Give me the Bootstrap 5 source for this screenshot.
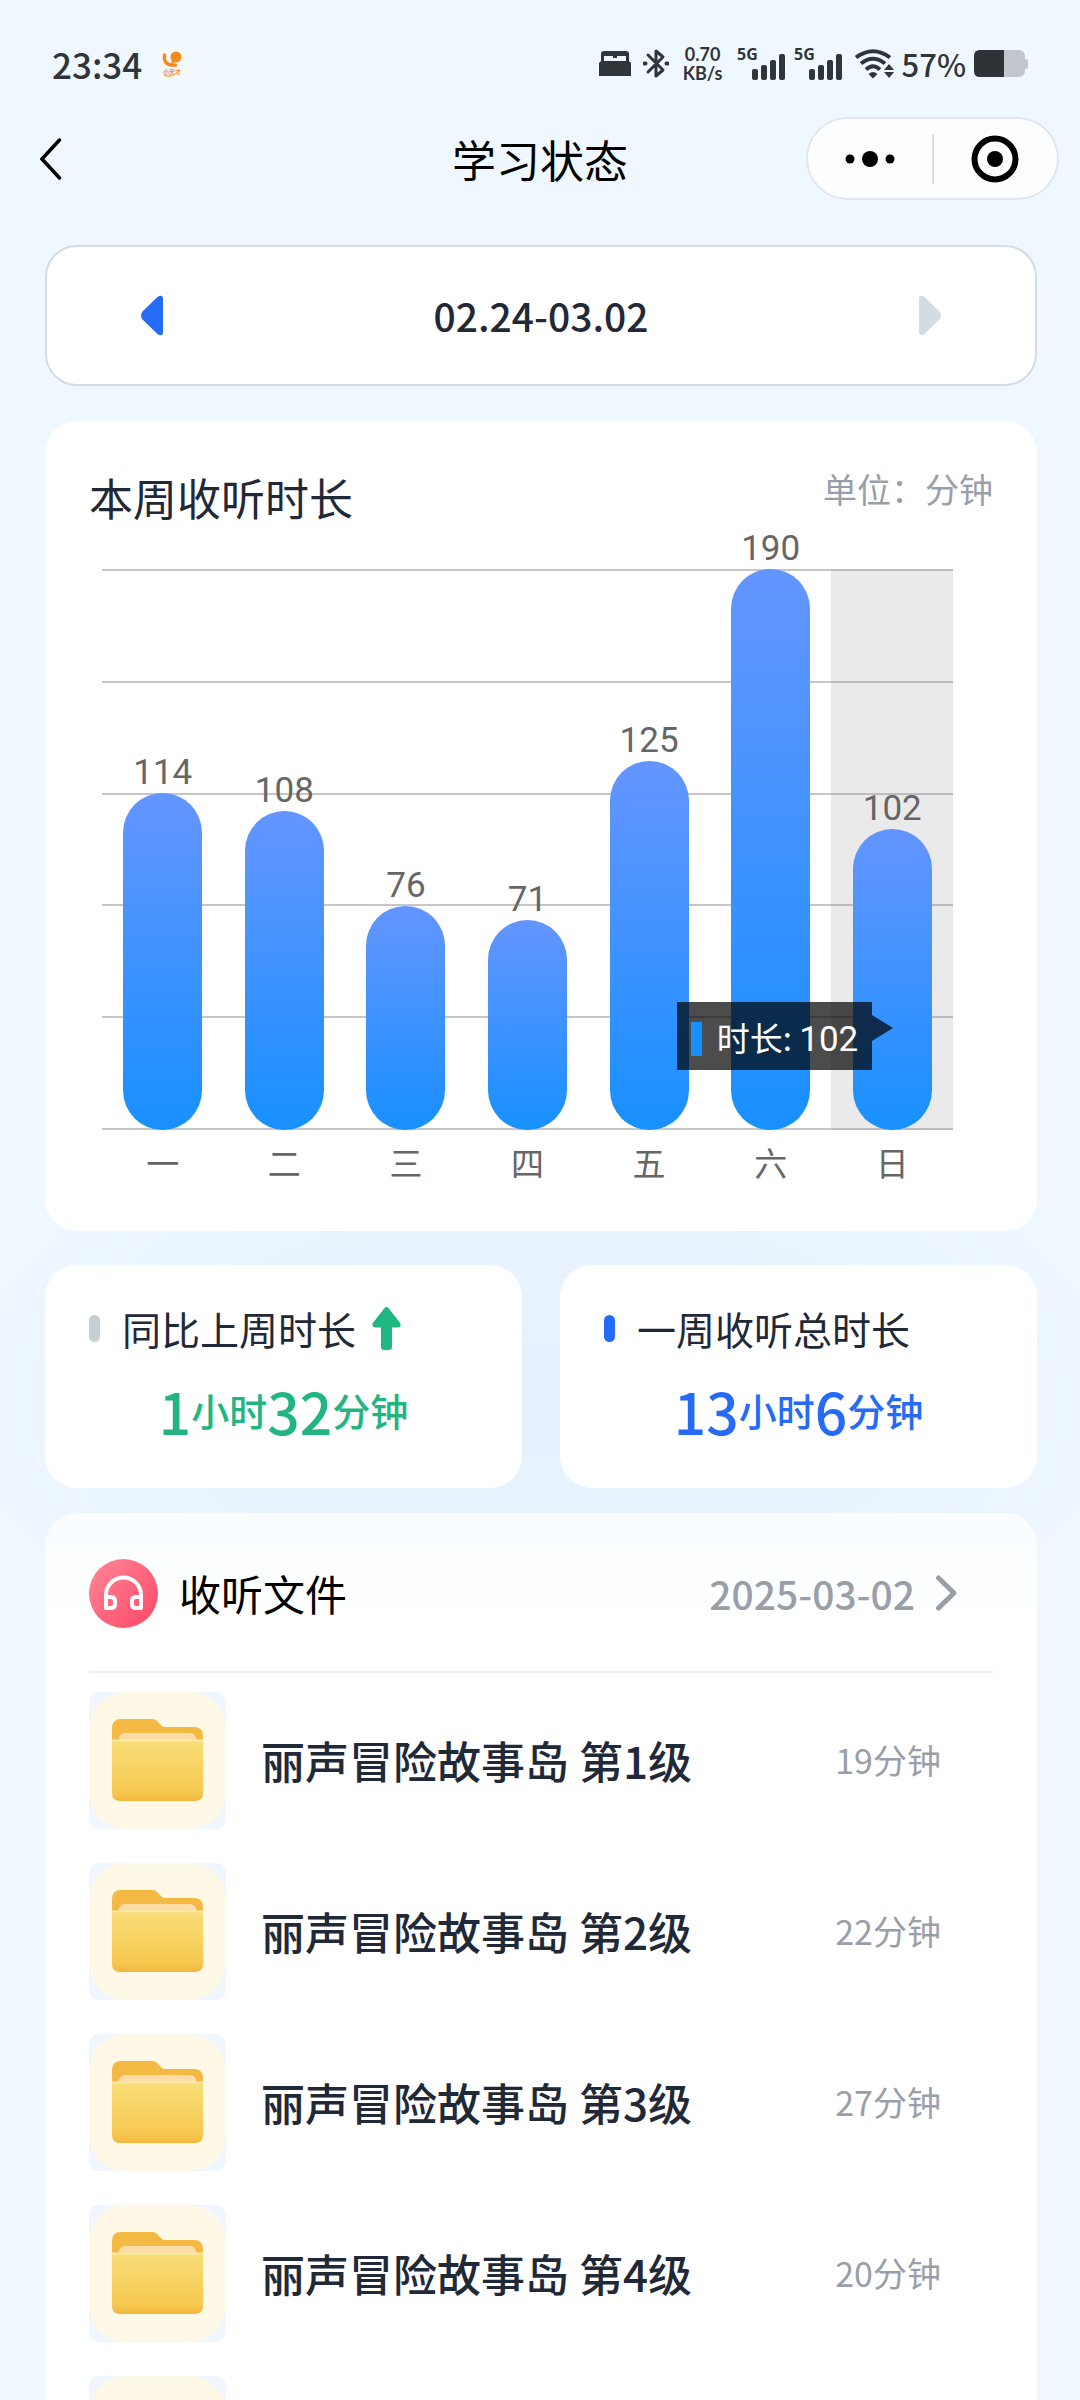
<!DOCTYPE html>
<html lang="zh-CN">
<head>
<meta charset="utf-8">
<meta name="viewport" content="width=device-width, initial-scale=1">
<title>学习状态</title>
<link rel="stylesheet" href="https://cdn.jsdelivr.net/npm/bootstrap@5.3.0/dist/css/bootstrap.min.css">
<style>
:root{--ink:#1f2937;--muted:#9a9ea9;--brand:#256bf8;--green:#22b57f;--status:#303539}
body{font-family:"Noto Sans CJK SC",sans-serif;color:var(--ink);background:#f0f8ff;line-height:1.2}
.app{background:radial-gradient(ellipse 640px 340px at 50% 1400px,#e5f1fe 0,#e8f3fe 55%,#f0f8ff 100%)}
.statusbar{padding:38px 52px 0;height:117px;color:var(--status)}
.statusbar .items{height:52px}
.gap-x{gap:8px}
.clock{font-size:35px;font-weight:500}
.pct{font-size:31px;font-weight:500}
.speed{width:44px;font-size:18px;line-height:19px;font-weight:700;font-family:Lato,sans-serif}
.topnav{display:grid;grid-template-columns:1fr auto 1fr;padding:0 21px;height:83px}
.topnav h1{font-size:44px;font-weight:400;color:#000;line-height:54px}
.back{padding:0 19px}
.capsule{width:253px;height:83px;border:2px solid #e3e5ec;border-radius:42px;background:#fbfdff}
.capsule .btn{flex:1 1 0}
.capsule .rule{width:2px;height:50px;background:#dcdee3}
main{padding:45px 43px 0 45px}
.panel{background:#fff;border-radius:32px}
.range{height:141px;border:2px solid #d4dce2;padding:0 94px}
.range .period{font-size:39px;font-weight:500}
.chart-panel{margin-top:35px;padding:49px 44px 37px}
.chart-title{font-size:44px;font-weight:400;line-height:54px}
.unit{font-size:34px;line-height:38px;color:var(--muted)}
.chart{margin:45px 40px 0 13px}
.plot{height:561px}
.gridlines i{height:2px;background:#c6c6c6}
.day{flex:1 1 0}
.day.active-day{background:rgba(150,150,150,.2)}
.amount{font-family:Roboto,sans-serif;font-size:35px;line-height:40px;color:#666}
.bar{width:79px;flex:none;border-radius:40px;background:linear-gradient(#6495ff,#1890ff)}
.axis span{flex:1 1 0;font-size:33px;line-height:64px;color:#666}
.tip{right:calc(50% + 20px);top:433px;height:68px;padding:6px 14px 0;gap:15px;background:rgba(0,0,0,.7);color:#fff;font-size:33px;white-space:nowrap}
.tip::after{content:"";position:absolute;left:100%;top:13px;border:13px solid transparent;border-left:21px solid rgba(0,0,0,.7);border-right:0}
.tip .swatch{width:11px;height:34px;background:#1890ff}
.tip .num{font-family:Roboto,sans-serif;font-size:35px}
.stats{margin-top:34px;gap:38px}
.stat{flex:1 1 0;padding:36px 44px 46px}
.stat-head{height:54px;font-size:39px}
.pill{width:11px;height:27px;border-radius:6px;background:#c3d0d6;margin-right:22px}
.pill.blue{background:var(--brand)}
.stat-value{margin-top:23px;line-height:64px;font-weight:500;font-size:38px}
.stat-value b{font-size:57px;font-weight:500}
.green{color:var(--green)}.blue-text{color:var(--brand)}
.files{margin-top:25px;padding:46px 44px 0;border-radius:32px 32px 0 0;background:linear-gradient(#f9fdff,#fff 120px)}
.files-head{height:114px;padding-bottom:44px;border-bottom:2px solid #eee}
.files-head h2{font-size:42px;font-weight:400;color:#000;margin-left:21px}
.pick{font-size:39px;font-weight:500;color:var(--muted);gap:20px;margin-right:36px}
.file-list{padding-top:19px;gap:34px}
.tile{width:137px;height:137px;flex:none}
.file-name{font-size:44px;font-weight:500;margin-left:35px}
.mins{font-size:34px;color:var(--muted);margin-right:52px}
</style>
</head>
<body>
<svg width="0" height="0" class="position-absolute" aria-hidden="true">
  <defs>
    <linearGradient id="front" x1="0" y1="0" x2="0" y2="1"><stop offset="0" stop-color="#f9de79"/><stop offset=".85" stop-color="#f6c84f"/><stop offset="1" stop-color="#f2b740"/></linearGradient>
    <linearGradient id="pink" x1="0" y1="0" x2="1" y2="1"><stop offset="0" stop-color="#ff8797"/><stop offset="1" stop-color="#fd4766"/></linearGradient>
    <symbol id="folder" viewBox="0 0 137 137">
      <rect width="137" height="137" rx="10" fill="#eff6ff"/>
      <rect width="137" height="137" rx="36" fill="#fef8e6"/>
      <path d="M23 52V36q0-9 9-9h31q4 0 6 3l3 3q1 2 4 2h29q9 0 9 9v8z" fill="#f3b942"/>
      <path d="M29 50q1-9 7-9h65q6 0 7 9z" fill="#fddca6"/>
      <path d="M23 48h91v53q0 8-8 8H31q-8 0-8-8z" fill="url(#front)"/>
      <path d="M23 48.500h91" stroke="#fbe9a8" stroke-width="2"/>
    </symbol>
    <symbol id="signal" viewBox="0 0 49 34">
      <g fill="#303539"><rect x="15" y="22" width="6" height="11" rx="2"/><rect x="24" y="18" width="6" height="15" rx="2"/><rect x="33" y="13" width="6" height="20" rx="2"/><rect x="42" y="7" width="6" height="26" rx="2"/></g>
      <text x="0" y="13" font-family="Open Sans" font-weight="700" font-size="16" fill="#303539">5G</text>
    </symbol>
  </defs>
</svg>

<div class="app vh-100 overflow-hidden">
  <header>
    <div class="statusbar">
      <div class="items d-flex align-items-center justify-content-between">
        <div class="d-flex align-items-center gap-3">
          <span class="clock">23:34</span>
          <svg width="28" height="32" viewBox="0 0 28 32" aria-label="小天才"><rect width="28" height="32" rx="4" fill="#f6f7f8"/><circle cx="18" cy="9" r="5.500" fill="#f58a1c"/><path d="M14 12l-1 4 4-2z" fill="#f58a1c"/><path d="M6.500 7v4q1 5 6 6h5" fill="none" stroke="#f58a1c" stroke-width="3.500" stroke-linecap="round"/><text x="5" y="26" font-size="6" font-weight="700" fill="#f58a1c">小天才</text><path d="M6 27q6 3 11-1" fill="none" stroke="#f58a1c"/></svg>
        </div>
        <div class="d-flex align-items-center gap-x">
          <svg class="me-1" width="32" height="26" viewBox="0 0 32 26" fill="#303539" aria-hidden="true"><path d="M2 10V3q0-3 3-3h22q3 0 3 3v7h-3V5h-9v2h-4V5H5v5z"/><path d="M0 12l2-2h28l2 2v13H0z"/></svg>
          <svg class="me-1" width="26" height="30" viewBox="0 0 26 30" fill="none" stroke="#303539" stroke-width="3" stroke-linejoin="round" stroke-linecap="round" aria-hidden="true"><path d="M5 6l15 15-7 6V2l7 6L5 23"/><path d="M1.500 14.500h1M23.500 14.500h1" stroke-width="4"/></svg>
          <div class="speed me-1 text-center"><div>0.70</div><div>KB/s</div></div>
          <svg width="49" height="34" aria-label="5G"><use href="#signal"/></svg>
          <svg class="me-1" width="49" height="34" aria-label="5G"><use href="#signal"/></svg>
          <svg width="39" height="30" viewBox="0 0 39 30" aria-hidden="true"><g fill="none" stroke="#303539" stroke-width="4"><path d="M1 8.500Q18 -4 35 8.500"/><path d="M6 14.500Q18 5 30 14.500"/><path d="M11 20.500Q18 14 25 20.500"/></g><path d="M13.500 25q4.500-4 9 0L18 29.500zM34 15l5 6H29zM29 23h10l-5 6z" fill="#303539"/></svg>
          <span class="pct">57%</span>
          <svg width="54" height="28" viewBox="0 0 54 28" aria-hidden="true"><rect width="51" height="27" rx="6" fill="#c2c6cf"/><rect x="49" y="9" width="5" height="10" rx="3" fill="#c2c6cf"/><path d="M30 0H6Q0 0 0 6v15q0 6 6 6h24z" fill="#303336"/></svg>
        </div>
      </div>
    </div>
    <nav class="topnav align-items-center" aria-label="导航">
      <button type="button" class="back btn border-0 text-start" aria-label="返回"><svg width="22" height="44" viewBox="0 0 22 44" fill="none" stroke="#000" stroke-width="3.500" stroke-linecap="round"><path d="M19.500 3L2 22l17.500 19"/></svg></button>
      <h1 class="m-0">学习状态</h1>
      <div class="capsule d-flex align-items-center ms-auto">
        <button type="button" class="btn border-0 p-0" aria-label="更多"><svg class="d-block mx-auto" width="50" height="20" viewBox="0 0 50 20"><circle cx="5" cy="10" r="4.500"/><circle cx="25" cy="10" r="8"/><circle cx="45" cy="10" r="4.500"/></svg></button>
        <span class="rule"></span>
        <button type="button" class="btn border-0 p-0" aria-label="关闭"><svg class="d-block mx-auto" width="48" height="48" viewBox="0 0 48 48"><circle cx="24" cy="24" r="20.500" fill="none" stroke="#000" stroke-width="6"/><circle cx="24" cy="24" r="8"/></svg></button>
      </div>
    </nav>
  </header>

  <main>
    <section class="panel range d-flex align-items-center justify-content-between" aria-label="周">
      <button type="button" class="btn border-0 p-0" aria-label="上一周"><svg class="d-block" width="22" height="41" viewBox="0 0 22 42" preserveAspectRatio="none" fill="#256bf8"><path d="M1.500 17L17 1.500Q22-1 22 4v34q0 5-5 2.500L1.500 25q-3-4 0-8z"/></svg></button>
      <span class="period">02.24-03.02</span>
      <button type="button" class="btn border-0 p-0" aria-label="下一周"><svg class="d-block" width="22" height="41" viewBox="0 0 22 42" preserveAspectRatio="none" fill="#d3dce2"><path d="M20.500 17L5 1.500Q0-1 0 4v34q0 5 5 2.500L20.500 25q3-4 0-8z"/></svg></button>
    </section>

    <section class="panel chart-panel">
      <div class="d-flex justify-content-between align-items-start">
        <h2 class="chart-title m-0">本周收听时长</h2>
        <span class="unit">单位：分钟</span>
      </div>
      <div class="chart">
        <div class="plot position-relative">
          <div class="gridlines position-absolute top-0 start-0 w-100 h-100 d-flex flex-column justify-content-between"><i></i><i></i><i></i><i></i><i></i><i></i></div>
          <div class="position-relative d-flex h-100 text-center">
            <div class="day d-flex flex-column justify-content-end align-items-center"><span class="amount">114</span><div class="bar" style="height:60%"></div></div>
            <div class="day d-flex flex-column justify-content-end align-items-center"><span class="amount">108</span><div class="bar" style="height:56.840%"></div></div>
            <div class="day d-flex flex-column justify-content-end align-items-center"><span class="amount">76</span><div class="bar" style="height:40%"></div></div>
            <div class="day d-flex flex-column justify-content-end align-items-center"><span class="amount">71</span><div class="bar" style="height:37.370%"></div></div>
            <div class="day d-flex flex-column justify-content-end align-items-center"><span class="amount">125</span><div class="bar" style="height:65.790%"></div></div>
            <div class="day d-flex flex-column justify-content-end align-items-center"><span class="amount">190</span><div class="bar" style="height:100%"></div></div>
            <div class="day active-day position-relative d-flex flex-column justify-content-end align-items-center"><span class="amount">102</span><div class="bar" style="height:53.680%"></div>
              <div class="tip position-absolute d-flex align-items-center" role="tooltip"><i class="swatch"></i><span>时长: <span class="num">102</span></span></div>
            </div>
          </div>
        </div>
        <div class="axis d-flex text-center"><span>一</span><span>二</span><span>三</span><span>四</span><span>五</span><span>六</span><span>日</span></div>
      </div>
    </section>

    <div class="stats d-flex">
      <section class="panel stat">
        <div class="stat-head d-flex align-items-center"><i class="pill"></i><span>同比上周时长</span><svg class="ms-3" width="29" height="43" viewBox="0 0 29 44" preserveAspectRatio="none" fill="#1fb880" aria-label="上升"><path d="M12.500 1q2-2 4 0L28 16q2 4-2 5h-6v20q0 3-3 3h-5q-3 0-3-3V21H3q-4-1-2-5z"/></svg></div>
        <div class="stat-value green d-flex align-items-center justify-content-center"><b>1</b>小时<b>32</b>分钟</div>
      </section>
      <section class="panel stat">
        <div class="stat-head d-flex align-items-center"><i class="pill blue"></i><span>一周收听总时长</span></div>
        <div class="stat-value blue-text d-flex align-items-center justify-content-center"><b>13</b>小时<b>6</b>分钟</div>
      </section>
    </div>

    <section class="files">
      <div class="files-head d-flex align-items-center">
        <svg width="69" height="69" viewBox="0 0 69 69" aria-hidden="true"><circle cx="34.500" cy="34.500" r="34.500" fill="url(#pink)"/><g fill="none" stroke="#fff" stroke-width="4" stroke-linejoin="round"><path d="M17 49V36a17.500 17.500 0 0 1 35 0v13"/><path d="M17 38h5q4 0 4 4v3q0 4-4 4h-5zM52 38h-5q-4 0-4 4v3q0 4 4 4h5z"/></g></svg>
        <h2 class="mb-0">收听文件</h2>
        <a href="#" class="pick d-flex align-items-center ms-auto text-decoration-none">2025-03-02<svg width="22" height="36" viewBox="0 0 22 36" fill="none" stroke="#9a9ea9" stroke-width="5" stroke-linecap="round" stroke-linejoin="round" aria-hidden="true"><path d="M3.500 3L19 18 3.500 33"/></svg></a>
      </div>
      <ul class="file-list list-unstyled m-0 d-flex flex-column">
        <li class="d-flex align-items-center"><svg class="tile" aria-hidden="true"><use href="#folder"/></svg><span class="file-name">丽声冒险故事岛 第1级</span><span class="mins ms-auto">19分钟</span></li>
        <li class="d-flex align-items-center"><svg class="tile" aria-hidden="true"><use href="#folder"/></svg><span class="file-name">丽声冒险故事岛 第2级</span><span class="mins ms-auto">22分钟</span></li>
        <li class="d-flex align-items-center"><svg class="tile" aria-hidden="true"><use href="#folder"/></svg><span class="file-name">丽声冒险故事岛 第3级</span><span class="mins ms-auto">27分钟</span></li>
        <li class="d-flex align-items-center"><svg class="tile" aria-hidden="true"><use href="#folder"/></svg><span class="file-name">丽声冒险故事岛 第4级</span><span class="mins ms-auto">20分钟</span></li>
        <li class="d-flex align-items-center"><svg class="tile" aria-hidden="true"><use href="#folder"/></svg></li>
      </ul>
    </section>
  </main>
</div>
<script src="https://cdn.jsdelivr.net/npm/bootstrap@5.3.0/dist/js/bootstrap.bundle.min.js"></script>
</body>
</html>
